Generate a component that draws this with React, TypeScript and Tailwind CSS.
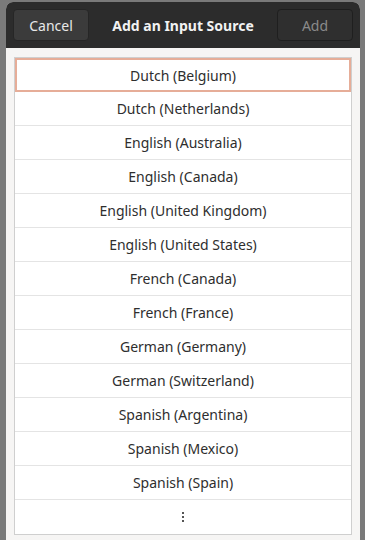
import React from 'react'

const sources = [
  'Dutch (Belgium)',
  'Dutch (Netherlands)',
  'English (Australia)',
  'English (Canada)',
  'English (United Kingdom)',
  'English (United States)',
  'French (Canada)',
  'French (France)',
  'German (Germany)',
  'German (Switzerland)',
  'Spanish (Argentina)',
  'Spanish (Mexico)',
  'Spanish (Spain)',
]

const App: React.FC = () => {
  return (
    <div
      className="h-[540px] w-[365px] overflow-hidden bg-[#7a7a7a] pl-[6px] pr-[5px] pt-[2px]"
      style={{ fontFamily: '"Noto Sans", "Open Sans", sans-serif' }}
    >
      <div className="flex h-full flex-col rounded-t-[7px] bg-[#f6f5f4]">
        {/* header bar */}
        <div className="flex h-[46px] shrink-0 items-center justify-between rounded-t-[7px] bg-[#2c2c2c] px-[7px]">
          <button className="h-[32px] w-[76px] rounded-[4px] border border-[#262626] bg-[#3b3b3b] text-[14px] text-[#e8e8e8]">
            Cancel
          </button>
          <span className="text-[14px] font-bold text-[#f2f2f2]">Add an Input Source</span>
          <button className="h-[32px] w-[76px] rounded-[4px] border border-[#1f1f1f] bg-[#2f2f2f] text-[14px] text-[#8a8a8a]">
            Add
          </button>
        </div>

        {/* list */}
        <div className="flex-1 px-[8px] pt-[9px]">
          <div className="border border-[#cfcfcf] bg-white">
            {sources.map((name, i) => (
              <div
                key={name}
                className={
                  i === 0
                    ? 'flex h-[34px] items-center justify-center border-2 border-[#e6ad98] text-[14px] text-[#2e2e2e]'
                    : 'flex h-[34px] items-center justify-center border-b border-[#e4e4e4] text-[14px] text-[#2e2e2e]'
                }
              >
                {name}
              </div>
            ))}
            <div className="flex h-[34px] items-center justify-center">
              <div className="flex flex-col gap-[2px]">
                <span className="block h-[2px] w-[2px] bg-[#555]" />
                <span className="block h-[2px] w-[2px] bg-[#555]" />
                <span className="block h-[2px] w-[2px] bg-[#555]" />
              </div>
            </div>
          </div>
        </div>
      </div>
    </div>
  )
}

export default App
